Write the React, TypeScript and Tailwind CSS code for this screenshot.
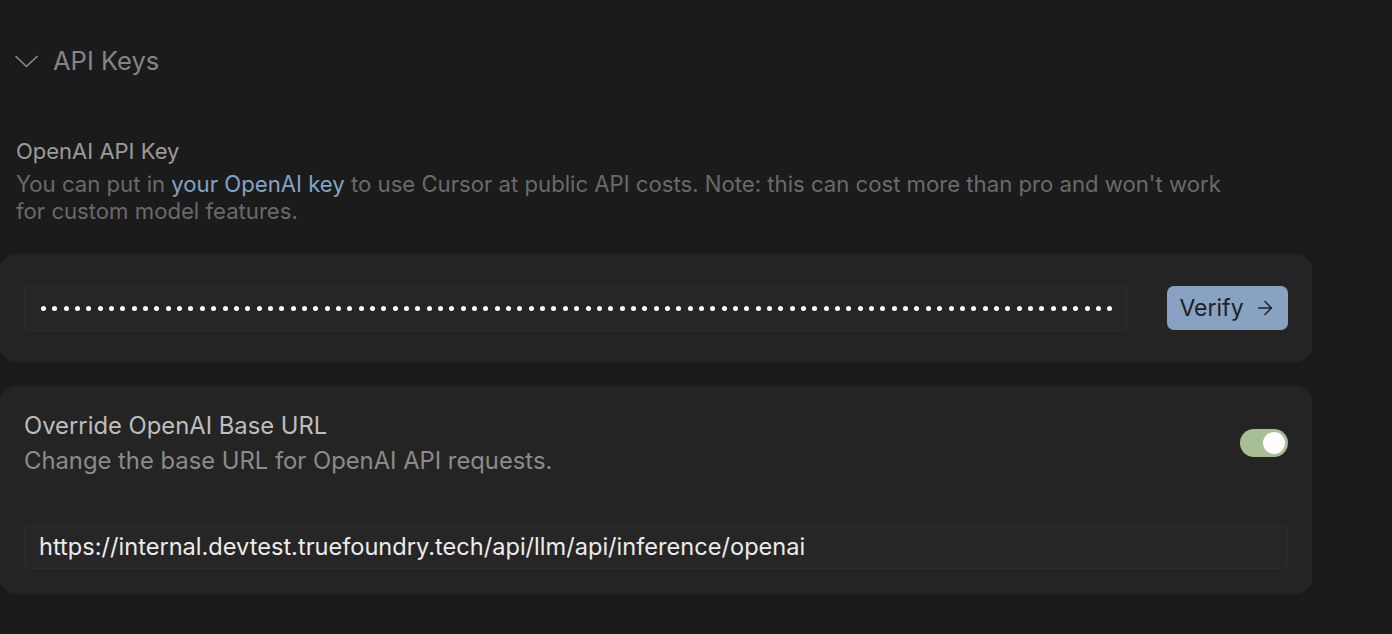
import { ArrowRight } from "lucide-react";

const dots = Array.from({ length: 95 });

export default function App() {
  return (
    <div className="h-[634px] w-full overflow-hidden bg-[#1b1b1b] font-['Inter',sans-serif]">
      <div className="w-[1312px]">
        <div className="mt-[46px] flex h-[30px] items-center gap-[15px] pl-[15px]">
          <svg width="23" height="13" viewBox="0 0 23 13" fill="none" className="text-[#8a8a8a]">
            <path d="M1 1.5 L11.5 11.5 L22 1.5" stroke="currentColor" strokeWidth="1.6" strokeLinecap="round" strokeLinejoin="round" />
          </svg>
          <span className="text-[25.5px] leading-[30px] text-[#858585]">API Keys</span>
        </div>

        <div className="mt-[62px] pl-[16px]">
          <div className="mb-[6px] text-[22px] leading-[27px] text-[#9b9b9b]">OpenAI API Key</div>
          <div className="text-[22.15px] leading-[27px] text-[#6a6a6a]">
            <div className="whitespace-nowrap">
              You can put in <span className="text-[#84a3c8]">your OpenAI key</span> to use Cursor at public API costs. Note: this can cost more than pro and won't work
            </div>
            <div className="whitespace-nowrap">for custom model features.</div>
          </div>
        </div>

        <div className="mt-[29px] flex h-[108px] items-center gap-[40px] rounded-[16px] bg-[#242424] px-[24px]">
          <div className="flex h-[45px] flex-1 items-center overflow-hidden rounded-[4px] border border-[#2c2c2c] bg-[#262626] pl-[16px]">
            <div className="flex w-[1072px] items-center justify-between">
              {dots.map((_, i) => (
                <div key={i} className="h-[5px] w-[5px] rounded-full bg-white" />
              ))}
            </div>
          </div>
          <button className="flex h-[44px] w-[121px] items-center justify-center gap-[10px] rounded-[7px] bg-[#88a3c1] text-[23px] text-[#1c1f24]">
            Verify
            <ArrowRight className="h-[22px] w-[22px]" strokeWidth={1.5} />
          </button>
        </div>

        <div className="mt-[24px] flex h-[208px] flex-col rounded-[16px] bg-[#242424] px-[24px]">
          <div className="mt-[22px] flex items-center justify-between">
            <div>
              <div className="text-[23.8px] leading-[35px] text-[#bdbdbd]">Override OpenAI Base URL</div>
              <div className="text-[23.8px] leading-[35px] text-[#8b8b8b]">Change the base URL for OpenAI API requests.</div>
            </div>
            <div className="flex h-[28px] w-[48px] items-center justify-end rounded-full bg-[#a7bf95] pr-[3px]">
              <div className="h-[22px] w-[22px] rounded-full bg-white" />
            </div>
          </div>
          <div className="mt-[46px] flex h-[45px] items-center rounded-[4px] border border-[#2c2c2c] bg-[#262626] pl-[14px]">
            <span className="whitespace-nowrap text-[23.6px] text-[#ececec]">https://internal.devtest.truefoundry.tech/api/llm/api/inference/openai</span>
          </div>
        </div>
      </div>
    </div>
  );
}
